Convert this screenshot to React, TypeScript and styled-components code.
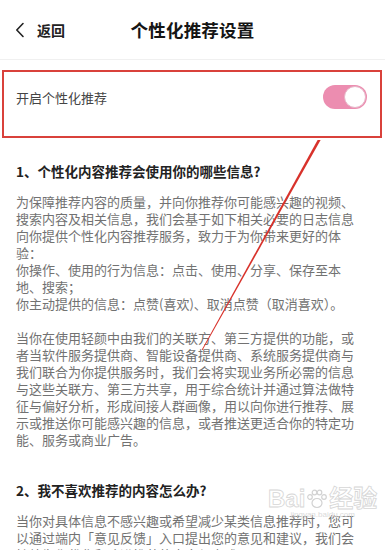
import styled, { createGlobalStyle } from 'styled-components';

const GlobalStyle = createGlobalStyle`
  html, body {
    margin: 0;
    padding: 0;
    background: #ffffff;
  }
  body {
    font-family: "Noto Sans CJK SC", "Noto Sans", sans-serif;
  }
`;

const sectionOne = [
  '为保障推荐内容的质量，并向你推荐你可能感兴趣的视频、',
  '搜索内容及相关信息，我们会基于如下相关必要的日志信息',
  '向你提供个性化内容推荐服务，致力于为你带来更好的体',
  '验：',
  '你操作、使用的行为信息：点击、使用、分享、保存至本',
  '地、搜索；',
  '你主动提供的信息：点赞(喜欢)、取消点赞（取消喜欢）。',
];

const sectionOneMore = [
  '当你在使用轻颜中由我们的关联方、第三方提供的功能，或',
  '者当软件服务提供商、智能设备提供商、系统服务提供商与',
  '我们联合为你提供服务时，我们会将实现业务所必需的信息',
  '与这些关联方、第三方共享，用于综合统计并通过算法做特',
  '征与偏好分析，形成间接人群画像，用以向你进行推荐、展',
  '示或推送你可能感兴趣的信息，或者推送更适合你的特定功',
  '能、服务或商业广告。',
];

const sectionTwo = [
  '当你对具体信息不感兴趣或希望减少某类信息推荐时，您可',
  '以通过端内「意见反馈」入口提出您的意见和建议，我们会',
  '持续为你优化和改进推荐的内容与方式。',
];

export default function App() {
  return (
    <Page>
      <GlobalStyle />
      <Header>
        <Back>
          <svg width="10" height="16" viewBox="0 0 10 16">
            <path d="M8 1.5 L1.8 8 L8 14.5" fill="none" stroke="#222" strokeWidth="1.6" strokeLinecap="round" strokeLinejoin="round" />
          </svg>
          <BackLabel>返回</BackLabel>
        </Back>
        <Title>个性化推荐设置</Title>
        <span />
      </Header>

      <Marked>
        <SettingRow>
          <SettingLabel>开启个性化推荐</SettingLabel>
          <Toggle $on>
            <Knob />
          </Toggle>
        </SettingRow>
      </Marked>

      <Content>
        <Heading>1、个性化内容推荐会使用你的哪些信息?</Heading>
        <Paragraph $gap={12}>
          {sectionOne.map((line) => (
            <Line key={line}>{line}</Line>
          ))}
        </Paragraph>
        <Paragraph $gap={17}>
          {sectionOneMore.map((line) => (
            <Line key={line}>{line}</Line>
          ))}
        </Paragraph>
        <Heading $gap={32}>2、我不喜欢推荐的内容怎么办?</Heading>
        <Paragraph $gap={12}>
          {sectionTwo.map((line) => (
            <Line key={line}>{line}</Line>
          ))}
        </Paragraph>
      </Content>

      <Annotation width="385" height="550" viewBox="0 0 385 550">
        <polygon points="317.6,140 320.6,140 202.6,350 201.6,350" fill="#d8322b" />
      </Annotation>

      <Watermark>
        <MarkWord>
          Bai
          <svg width="22" height="20" viewBox="0 0 22 20">
            <g fill="none" stroke="#d2d2d2" strokeWidth="1.2">
              <ellipse cx="11" cy="14" rx="5" ry="4.5" />
              <circle cx="4" cy="8" r="2.3" />
              <circle cx="8.5" cy="3.5" r="2.3" />
              <circle cx="13.5" cy="3.5" r="2.3" />
              <circle cx="18" cy="8" r="2.3" />
            </g>
          </svg>
          经验
        </MarkWord>
        <MarkUrl>jingyan.baidu.com</MarkUrl>
      </Watermark>
    </Page>
  );
}

const Page = styled.div`
  position: relative;
  width: 385px;
  height: 550px;
  overflow: hidden;
  background: #ffffff;
`;

const Header = styled.div`
  height: 60px;
  display: grid;
  grid-template-columns: 1fr auto 1fr;
  align-items: center;
  padding: 0 15px;
  box-sizing: border-box;
  border-bottom: 1px solid #f0f0f0;
`;

const Back = styled.div`
  display: flex;
  align-items: center;
  gap: 12px;
`;

const BackLabel = styled.span`
  font-size: 14px;
  font-weight: 700;
  color: #222;
  line-height: 20px;
`;

const Title = styled.div`
  font-size: 17.5px;
  font-weight: 700;
  color: #151515;
  letter-spacing: 0.2px;
`;

const Marked = styled.div`
  margin: 10px 3px 0 2px;
  height: 68px;
  box-sizing: border-box;
  border: 2px solid #d9413b;
  padding: 13px 13px 0 12px;
`;

const SettingRow = styled.div`
  height: 24px;
  display: flex;
  align-items: center;
  justify-content: space-between;
`;

const SettingLabel = styled.span`
  font-size: 13px;
  color: #444;
  line-height: 17px;
`;

const Toggle = styled.div<{ $on?: boolean }>`
  width: 44px;
  height: 24px;
  border-radius: 12px;
  background: ${({ $on }) => ($on ? '#ec8db0' : '#dddddd')};
  display: flex;
  align-items: center;
  justify-content: ${({ $on }) => ($on ? 'flex-end' : 'flex-start')};
  padding: 0 1px;
  box-sizing: border-box;
`;

const Knob = styled.div`
  width: 22px;
  height: 22px;
  border-radius: 50%;
  background: #ffffff;
  box-sizing: border-box;
  border: 1px solid #e6b6c8;
`;

const Content = styled.div`
  padding: 0 16px;
`;

const Heading = styled.div<{ $gap?: number }>`
  margin-top: ${({ $gap }) => ($gap ? `${$gap}px` : '23px')};
  font-size: 13.5px;
  font-weight: 700;
  color: #222;
  line-height: 20px;
`;

const Paragraph = styled.div<{ $gap?: number }>`
  margin-top: ${({ $gap }) => ($gap ? `${$gap}px` : '10px')};
  font-size: 13px;
  line-height: 17px;
  color: #727272;
`;

const Line = styled.div`
  white-space: nowrap;
`;

const Annotation = styled.svg`
  position: absolute;
  left: 0;
  top: 0;
  pointer-events: none;
`;

const Watermark = styled.div`
  position: absolute;
  left: 268px;
  top: 486px;
  display: flex;
  flex-direction: column;
  align-items: center;
  pointer-events: none;
`;

const MarkWord = styled.div`
  display: flex;
  align-items: center;
  gap: 1px;
  font-family: "Liberation Sans", "Noto Sans CJK SC", sans-serif;
  font-size: 24px;
  font-weight: 700;
  color: transparent;
  -webkit-text-stroke: 0.8px #d6d6d6;
  line-height: 26px;
`;

const MarkUrl = styled.div`
  font-family: "Liberation Sans", sans-serif;
  font-size: 8px;
  color: #dadada;
  margin-top: -2px;
`;
